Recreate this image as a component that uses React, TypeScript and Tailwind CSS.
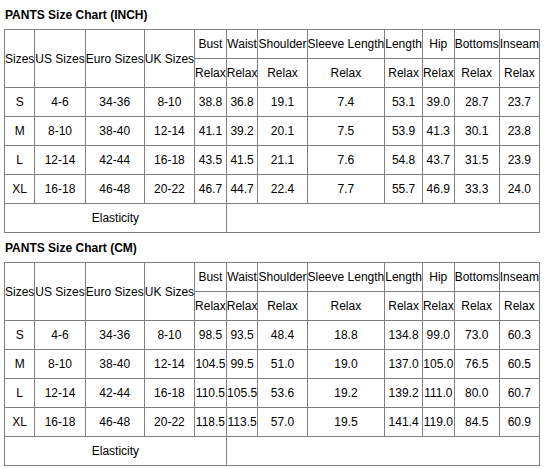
import React from "react";

const inch = [
  ["S", "4-6", "34-36", "8-10", "38.8", "36.8", "19.1", "7.4", "53.1", "39.0", "28.7", "23.7"],
  ["M", "8-10", "38-40", "12-14", "41.1", "39.2", "20.1", "7.5", "53.9", "41.3", "30.1", "23.8"],
  ["L", "12-14", "42-44", "16-18", "43.5", "41.5", "21.1", "7.6", "54.8", "43.7", "31.5", "23.9"],
  ["XL", "16-18", "46-48", "20-22", "46.7", "44.7", "22.4", "7.7", "55.7", "46.9", "33.3", "24.0"],
];

const cm = [
  ["S", "4-6", "34-36", "8-10", "98.5", "93.5", "48.4", "18.8", "134.8", "99.0", "73.0", "60.3"],
  ["M", "8-10", "38-40", "12-14", "104.5", "99.5", "51.0", "19.0", "137.0", "105.0", "76.5", "60.5"],
  ["L", "12-14", "42-44", "16-18", "110.5", "105.5", "53.6", "19.2", "139.2", "111.0", "80.0", "60.7"],
  ["XL", "16-18", "46-48", "20-22", "118.5", "113.5", "57.0", "19.5", "141.4", "119.0", "84.5", "60.9"],
];

const measures = ["Bust", "Waist", "Shoulder", "Sleeve Length", "Length", "Hip", "Bottoms", "Inseam"];

const cell = "border border-[#808080] p-0 h-[29px] text-center align-middle whitespace-nowrap";

function Chart({ title, rows }: { title: string; rows: string[][] }) {
  return (
    <div>
      <div className="h-[29px] flex items-center pl-[1px] font-bold text-[12px] text-black">{title}</div>
      <table className="border-collapse border border-[#808080] text-[12px] text-black">
        <tbody>
          <tr>
            <td rowSpan={2} className={cell}>Sizes</td>
            <td rowSpan={2} className={cell}>US Sizes</td>
            <td rowSpan={2} className={cell}>Euro Sizes</td>
            <td rowSpan={2} className={cell}>UK Sizes</td>
            {measures.map((m) => (
              <td key={m} className={cell}>{m}</td>
            ))}
          </tr>
          <tr>
            {measures.map((m) => (
              <td key={m} className={cell}>Relax</td>
            ))}
          </tr>
          {rows.map((r) => (
            <tr key={r[0]}>
              {r.map((v, i) => (
                <td key={i} className={cell}>{v}</td>
              ))}
            </tr>
          ))}
          <tr>
            <td colSpan={5} className={cell}>Elasticity</td>
            <td colSpan={7} className={cell}></td>
          </tr>
        </tbody>
      </table>
    </div>
  );
}

export default function App() {
  return (
    <div className="bg-white w-[548px] h-[469px] px-[4px] overflow-hidden" style={{ fontFamily: '"Liberation Sans", Arial, sans-serif' }}>
      <Chart title="PANTS Size Chart (INCH)" rows={inch} />
      <Chart title="PANTS Size Chart (CM)" rows={cm} />
    </div>
  );
}
